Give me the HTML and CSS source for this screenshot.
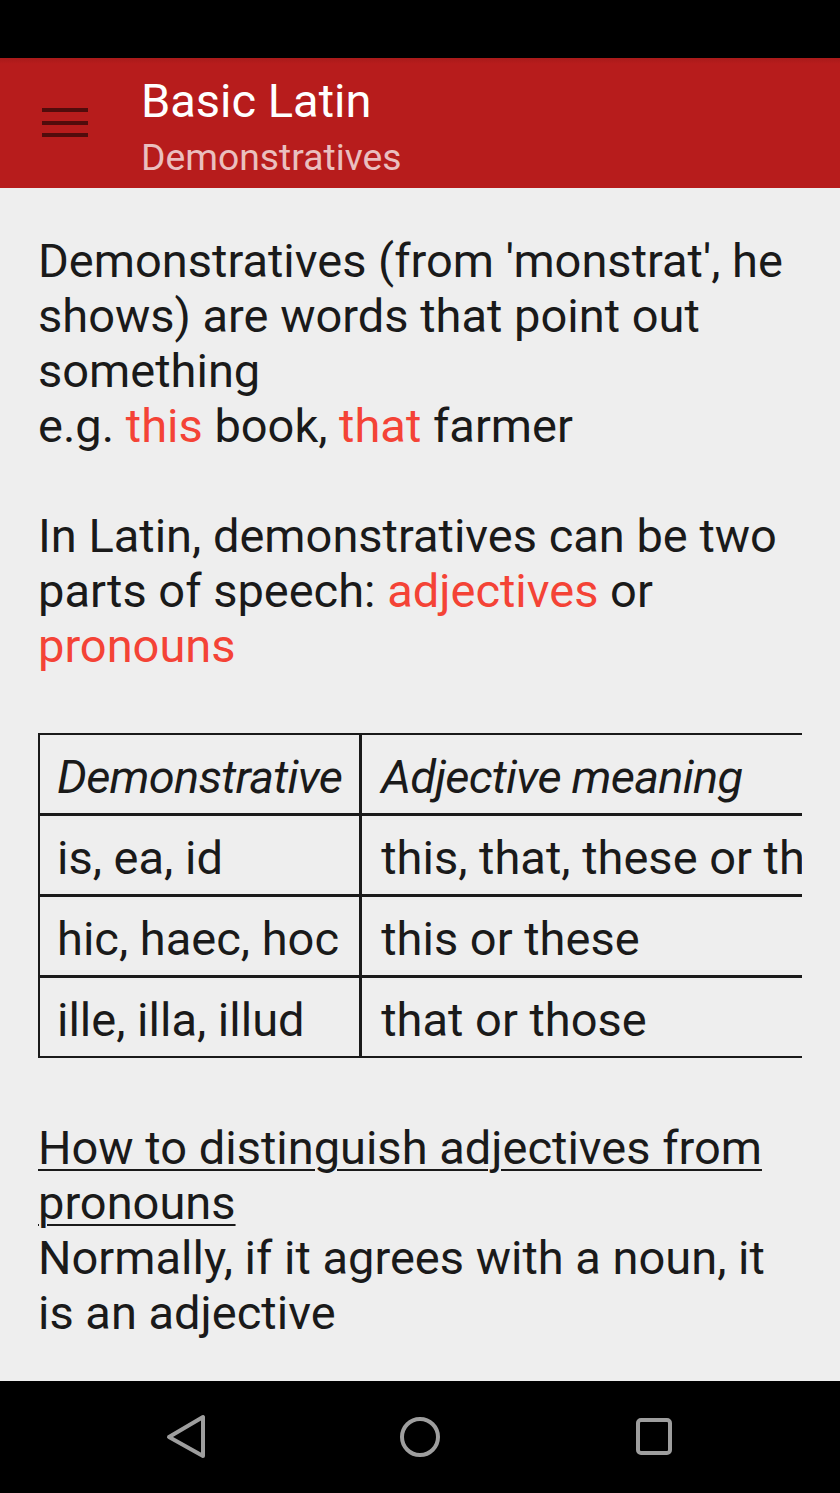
FILE: index.html
```html
<!DOCTYPE html>
<html lang="en">
<head>
<meta charset="utf-8">
<title>Basic Latin - Demonstratives</title>
<link rel="stylesheet" href="styles.css">
</head>
<body>
<div class="screen">
  <div class="statusbar"></div>
  <header class="appbar">
    <div class="menu" aria-label="menu">
      <span></span><span></span><span></span>
    </div>
    <div class="titles">
      <div class="title">Basic Latin</div>
      <div class="subtitle">Demonstratives</div>
    </div>
  </header>
  <main class="content">
    <p class="text">Demonstratives (from 'monstrat', he shows) are words that point out something<br>e.g. <span class="hl">this</span> book, <span class="hl">that</span> farmer<br><br>In Latin, demonstratives can be two parts of speech: <span class="hl">adjectives</span> or <span class="hl">pronouns</span></p>
    <div class="table-wrap">
      <table class="demo">
        <tr class="first"><th>Demonstrative</th><th>Adjective meaning</th></tr>
        <tr><td>is, ea, id</td><td>this, that, these or those</td></tr>
        <tr><td>hic, haec, hoc</td><td>this or these</td></tr>
        <tr class="last"><td>ille, illa, illud</td><td>that or those</td></tr>
      </table>
    </div>
    <p class="text after"><span class="ul">How to distinguish adjectives from pronouns</span><br>Normally, if it agrees with a noun, it is an adjective</p>
  </main>
  <nav class="navbar">
    <div class="navbtn">
      <svg width="48" height="48" viewBox="0 0 48 48"><path d="M41 4 L41 43 L7 24 Z" fill="none" stroke="#9e9e9e" stroke-width="4" stroke-linejoin="round"/></svg>
    </div>
    <div class="navbtn">
      <svg width="48" height="48" viewBox="0 0 48 48"><circle cx="24" cy="24" r="18" fill="none" stroke="#9e9e9e" stroke-width="4"/></svg>
    </div>
    <div class="navbtn">
      <svg width="48" height="48" viewBox="0 0 48 48"><rect x="8" y="7" width="32" height="33" rx="3" fill="none" stroke="#9e9e9e" stroke-width="4"/></svg>
    </div>
  </nav>
</div>
</body>
</html>
```
FILE: styles.css
```css
* { box-sizing: border-box; }
html, body { margin: 0; padding: 0; }
body {
  width: 840px;
  height: 1493px;
  overflow: hidden;
  font-family: Roboto, "Noto Sans", sans-serif;
  background: #eeeeee;
}
.screen {
  display: flex;
  flex-direction: column;
  height: 1493px;
}
.statusbar {
  height: 58px;
  background: #000;
  flex: none;
}
.appbar {
  height: 130px;
  flex: none;
  background: linear-gradient(#a81a1a 0px, #b71c1c 6px);
  display: flex;
  align-items: flex-start;
}
.menu {
  width: 46px;
  margin-left: 42px;
  margin-top: 50px;
  display: flex;
  flex-direction: column;
  gap: 8.5px;
}
.menu span {
  display: block;
  height: 4px;
  background: rgba(0,0,0,0.55);
}
.titles {
  margin-left: 53px;
  padding-top: 15px;
}
.title {
  color: #ffffff;
  font-size: 47px;
  line-height: 56px;
}
.subtitle {
  color: rgba(255,255,255,0.72);
  font-size: 37.3px;
  line-height: 44px;
  margin-top: 6px;
}
.content {
  flex: 1;
  padding: 45px 38px 0 38px;
  overflow: hidden;
  color: #1a1a1a;
}
.text {
  margin: 0;
  font-size: 47px;
  line-height: 55px;
}
.hl { color: #f44336; }
.ul { text-decoration: underline; text-decoration-thickness: 2px; text-underline-offset: 5px; }
.table-wrap {
  margin-top: 60px;
  width: 764px;
  overflow: hidden;
}
.demo {
  border-collapse: separate;
  border-spacing: 0;
  font-size: 47px;
  line-height: 55px;
}
.demo th, .demo td {
  border: 0 solid #1a1a1a;
  border-right-width: 3px;
  border-bottom-width: 3px;
  padding: 14px 18px 9px 19px;
  white-space: nowrap;
  text-align: left;
  font-weight: 400;
}
.demo th:first-child, .demo td:first-child {
  border-left-width: 2px;
  padding-left: 17px;
  padding-right: 17px;
}
.demo tr.first th { border-top-width: 2px; }
.demo tr.last td { border-bottom-width: 2px; }
.demo th { font-style: italic; letter-spacing: -0.75px; }
.after { margin-top: 62px; }
.navbar {
  height: 112px;
  flex: none;
  background: #000;
  display: flex;
  justify-content: center;
  align-items: center;
  gap: 186px;
}
.navbtn {
  width: 48px;
  height: 48px;
}
.navbtn svg { display: block; }
```
